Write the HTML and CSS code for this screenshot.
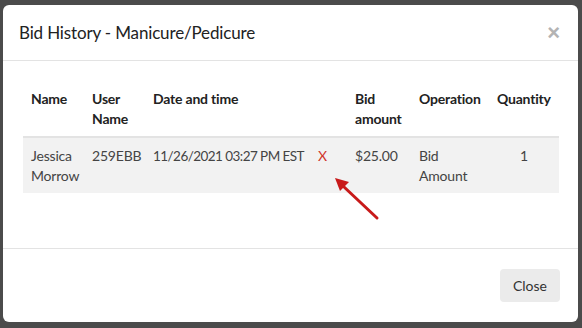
FILE: index.html
```html
<!DOCTYPE html>
<html lang="en">
<head>
    <meta charset="UTF-8">
    <meta name="viewport" content="width=device-width, initial-scale=1.0">
    <title>Bid History</title>
    <link rel="stylesheet" href="styles.css">
</head>
<body>
    <div class="backdrop">
        <div class="modal">
            <div class="modal-header">
                <h5 class="modal-title">Bid History - Manicure/Pedicure</h5>
                <button type="button" class="close-x">&times;</button>
            </div>
            <div class="modal-body">
                <table class="bids">
                    <thead>
                        <tr>
                            <th class="c-name">Name</th>
                            <th class="c-user">User Name</th>
                            <th class="c-date">Date and time</th>
                            <th class="c-del"></th>
                            <th class="c-bid">Bid amount</th>
                            <th class="c-op">Operation</th>
                            <th class="c-qty">Quantity</th>
                        </tr>
                    </thead>
                    <tbody>
                        <tr>
                            <td>Jessica Morrow</td>
                            <td>259EBB</td>
                            <td class="date">11/26/2021 03:27 PM EST</td>
                            <td class="remove">X</td>
                            <td>$25.00</td>
                            <td>Bid Amount</td>
                            <td class="qty">1</td>
                        </tr>
                    </tbody>
                </table>
            </div>
            <div class="modal-footer">
                <button type="button" class="btn-close">Close</button>
            </div>
            <svg class="arrow" width="60" height="60" viewBox="0 0 60 60">
                <line x1="52" y1="50" x2="18" y2="18" stroke="#c81a1a" stroke-width="3" stroke-linecap="round"/>
                <polygon points="10,10 24,14 15,23" fill="#c81a1a"/>
            </svg>
        </div>
    </div>
</body>
</html>
```

FILE: styles.css
```css
html, body {
    margin: 0;
    padding: 0;
}
body {
    font-family: Lato, "Open Sans", sans-serif;
    font-size: 14px;
    color: #333;
    background: #4d4d4d;
}
.backdrop {
    width: 582px;
    height: 328px;
    padding: 5px 4px 6px 3px;
    box-sizing: border-box;
    background: #4b4b4b;
}
.modal {
    position: relative;
    height: 317px;
    background: #fff;
    border-radius: 6px;
    display: flex;
    flex-direction: column;
}
.modal-header {
    height: 55px;
    padding: 0 16px;
    border-bottom: 1px solid #e3e3e3;
    display: flex;
    align-items: center;
    justify-content: space-between;
}
.modal-title {
    margin: 0;
    font-size: 17px;
    font-weight: normal;
    letter-spacing: -0.15px;
    color: #222;
}
.close-x {
    border: none;
    background: none;
    padding: 0;
    margin-right: 2px;
    font-size: 22px;
    font-weight: bold;
    color: #b3b3b3;
    line-height: 1;
    font-family: Arial, sans-serif;
}
.modal-body {
    padding: 20px 20px 0;
    flex: 1;
    border-bottom: 1px solid #e3e3e3;
}
.bids {
    width: 536px;
    border-collapse: collapse;
    table-layout: fixed;
    letter-spacing: -0.2px;
}
.bids th, .bids td {
    box-sizing: border-box;
    padding: 8px 8px 7px;
    line-height: 20px;
    text-align: left;
    vertical-align: top;
}
.c-name { width: 61px; }
.c-user { width: 61px; }
.c-date { width: 165px; }
.c-del { width: 37px; }
.c-bid { width: 64px; }
.c-op { width: 78px; }
.c-qty { width: 70px; }
.bids th {
    font-weight: bold;
    color: #222;
    border-bottom: 2px solid #e3e3e3;
}
.bids tbody tr {
    background: #f2f2f2;
}
.bids td {
    color: #444;
}
.bids td.date {
    white-space: nowrap;
    font-size: 13.5px;
    letter-spacing: -0.55px;
}
.bids td.remove {
    color: #d0342c;
}
.bids td.qty {
    text-align: center;
}
.modal-footer {
    padding: 20px 18px 20px;
    display: flex;
    justify-content: flex-end;
}
.btn-close {
    font-family: inherit;
    font-size: 14px;
    color: #333;
    background: #ebebeb;
    border: none;
    border-radius: 4px;
    padding: 6px 13px;
    line-height: 21px;
    height: 33px;
}
.arrow {
    position: absolute;
    left: 322px;
    top: 163px;
}
```
